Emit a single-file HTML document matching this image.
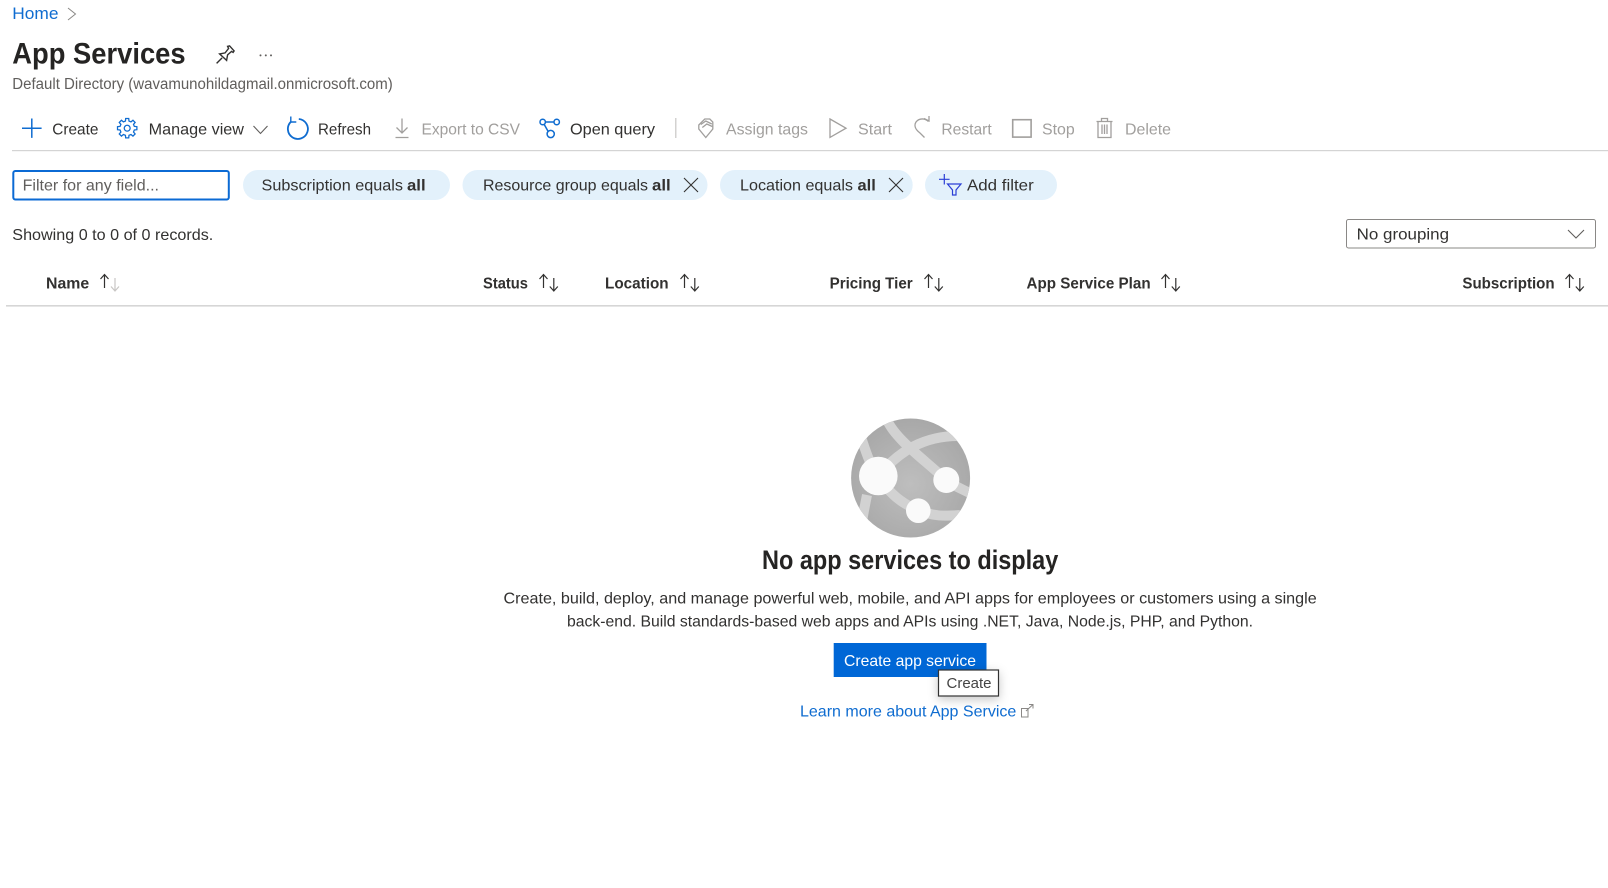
<!DOCTYPE html>
<html lang="en">
<head>
<meta charset="utf-8">
<title>App Services</title>
<style>
html,body{margin:0;padding:0;background:#fff;width:1608px;height:888px;overflow:hidden}
svg{display:block}
text{font-family:"Liberation Sans",Arial,sans-serif;font-size:16px;fill:#323130}
.b{font-weight:700}
.d{fill:#a19f9d}
.l{fill:#0f6cd0}
.h{font-weight:700;fill:#323130}
.ic{fill:none;stroke-width:1.3}
.blue{stroke:#0f6cd0}
.gray{stroke:#a19f9d}
</style>
</head>
<body>
<svg width="1608" height="888" viewBox="0 0 1608 888" xmlns="http://www.w3.org/2000/svg">
<defs>
<clipPath id="g"><circle cx="910.6" cy="478" r="59.5"/></clipPath>
<radialGradient id="gg" cx="50%" cy="55%" r="55%"><stop offset="0" stop-color="#bebebe"/><stop offset="1" stop-color="#a8a8a8"/></radialGradient>
<filter id="sh" x="-30%" y="-50%" width="160%" height="220%"><feDropShadow dx="0" dy="3" stdDeviation="5" flood-color="#000" flood-opacity=".22"/></filter>
</defs>

<!-- breadcrumb -->
<text x="12.3" y="19" class="l" style="font-size:17px" textLength="46.2" lengthAdjust="spacingAndGlyphs">Home</text>
<path d="M68 8l7.5 6-7.5 6" fill="none" stroke="#8a8886" stroke-width="1"/>

<!-- title -->
<text x="12.3" y="63.500" class="b" style="font-size:30px;fill:#252423" textLength="173.3" lengthAdjust="spacingAndGlyphs">App Services</text>
<g transform="translate(225.6 54.4)" fill="none" stroke="#323130" stroke-width="1.4">
<path d="M-9 9l5.5-5.5M-6 -0.5L-0.5 -1.5L3 -6L2 -8L4 -8.5L8.5 -3.5L7.5 -2L6 -3L2 0.5L1 6Z"/>
</g>
<g fill="#605e5c"><circle cx="260.5" cy="55.4" r="1"/><circle cx="265.8" cy="55.4" r="1"/><circle cx="271" cy="55.4" r="1"/></g>
<text x="12.3" y="89" style="font-size:15.5px;fill:#605e5c" textLength="380.5" lengthAdjust="spacingAndGlyphs">Default Directory (wavamunohildagmail.onmicrosoft.com)</text>

<!-- toolbar -->
<path d="M31.8 118.5v19.4M22 128.2h19.6" class="ic blue" style="stroke-width:1.5"/>
<text x="52.3" y="134.3" textLength="46.1" lengthAdjust="spacingAndGlyphs">Create</text>

<g transform="translate(127.2 128.2) scale(.98)" class="ic blue">
<path d="M7.28 -1.81L9.88 -1.56L9.88 1.56L7.28 1.81L6.43 3.86L8.09 5.88L5.88 8.09L3.86 6.43L1.81 7.28L1.56 9.88L-1.56 9.88L-1.81 7.28L-3.86 6.43L-5.88 8.09L-8.09 5.88L-6.43 3.86L-7.28 1.81L-9.88 1.56L-9.88 -1.56L-7.28 -1.81L-6.43 -3.86L-8.09 -5.88L-5.88 -8.09L-3.86 -6.43L-1.81 -7.28L-1.56 -9.88L1.56 -9.88L1.81 -7.28L3.86 -6.43L5.88 -8.09L8.09 -5.88L6.43 -3.86Z"/>
<circle r="3"/>
</g>
<text x="148.7" y="134.3" textLength="95.3" lengthAdjust="spacingAndGlyphs">Manage view</text>
<path d="M253.5 126l7 7.5 7-7.5" fill="none" stroke="#605e5c" stroke-width="1.1"/>

<g transform="translate(297.8 129)" fill="none" stroke="#0f6cd0">
<path d="M1 -10A10 10 0 1 1 -6.8 -7.3" stroke-width="1.8"/>
<path d="M-7 -12.5V-7H-1.500" stroke-width="1.4"/>
</g>
<text x="318" y="134.3" textLength="53" lengthAdjust="spacingAndGlyphs">Refresh</text>

<path d="M402 118.5v14M396.5 127.5l5.5 5.5 5.5-5.5M395.5 137.5h13" class="ic gray"/>
<text x="421.5" y="134.3" class="d" textLength="98.5" lengthAdjust="spacingAndGlyphs">Export to CSV</text>

<g class="ic blue" style="stroke-width:1.5" transform="translate(549.7 128)">
<circle cx="-7" cy="-6" r="2.7"/><circle cx="7" cy="-6" r="2.7"/><circle cx="1" cy="6" r="3.6"/>
<path d="M-4.3 -6H4.3M-5.6 -3.7L-1.5 3.500"/>
</g>
<text x="570" y="134.3" textLength="85" lengthAdjust="spacingAndGlyphs">Open query</text>

<path d="M675.8 118v20" stroke="#c8c6c4" stroke-width="1.2"/>

<g class="ic gray" transform="translate(705.8 128)">
<path d="M-7 -3L-1 -9L4 -9L7 -6L7 1L0 9.500L-7 1Z"/>
<path d="M-5 -3.500L0 -7L6 -4M-3.500 -0.500L1 -4L6.500 -1.500"/>
</g>
<text x="726" y="134.3" class="d" textLength="82" lengthAdjust="spacingAndGlyphs">Assign tags</text>

<path d="M830 119l16 9.2-16 9.2z" class="ic gray"/>
<text x="858" y="134.3" class="d" textLength="34" lengthAdjust="spacingAndGlyphs">Start</text>

<g class="ic gray" transform="translate(922 128)">
<path d="M6.500 -6.500C3 -10 -3 -10 -6 -6C-8.500 -2 -6 2 -2 5L2.500 9.500"/>
<path d="M2 -9.500L7 -7L7 -12"/>
</g>
<text x="941.4" y="134.3" class="d" textLength="50.3" lengthAdjust="spacingAndGlyphs">Restart</text>

<rect x="1012.7" y="119.7" width="18.4" height="17.4" fill="none" stroke="#a19f9d" stroke-width="1.6"/>
<text x="1042" y="134.3" class="d" textLength="32.7" lengthAdjust="spacingAndGlyphs">Stop</text>

<g class="ic gray" transform="translate(1104.5 128)">
<path d="M-8 -6.500H8M-3 -6.500V-9.500H3V-6.500M-6.500 -6.500V9.500H6.500V-6.500M-2.500 -3.500V6M0 -3.500V6M2.500 -3.500V6"/>
</g>
<text x="1125" y="134.3" class="d" textLength="46" lengthAdjust="spacingAndGlyphs">Delete</text>

<rect x="12" y="150" width="1596" height="1.2" fill="#d4d4d4"/>

<!-- filter row -->
<rect x="13.3" y="171" width="215.5" height="28.5" rx="2" fill="#fff" stroke="#0b6ad4" stroke-width="2"/>
<text x="22.6" y="190.3" style="fill:#605e5c" textLength="136.4" lengthAdjust="spacingAndGlyphs">Filter for any field...</text>

<rect x="243" y="170" width="207" height="30" rx="15" fill="#e3f1fb"/>
<text x="261.500" y="190.3" textLength="141.5" lengthAdjust="spacingAndGlyphs">Subscription equals</text>
<text x="407" y="190.3" class="b" textLength="18.6" lengthAdjust="spacingAndGlyphs">all</text>

<rect x="462.5" y="170" width="245" height="30" rx="15" fill="#e3f1fb"/>
<text x="483" y="190.3" textLength="165" lengthAdjust="spacingAndGlyphs">Resource group equals</text>
<text x="652" y="190.3" class="b" textLength="18.7" lengthAdjust="spacingAndGlyphs">all</text>
<path d="M684 178l14 14M698 178l-14 14" stroke="#323130" stroke-width="1.1"/>

<rect x="720" y="170" width="192.7" height="30" rx="15" fill="#e3f1fb"/>
<text x="740" y="190.3" textLength="113" lengthAdjust="spacingAndGlyphs">Location equals</text>
<text x="857.500" y="190.3" class="b" textLength="18.3" lengthAdjust="spacingAndGlyphs">all</text>
<path d="M889 178l14 14M903 178l-14 14" stroke="#323130" stroke-width="1.1"/>

<rect x="925" y="170" width="132" height="30" rx="15" fill="#e3f1fb"/>
<g fill="none" stroke="#2b3fd6" stroke-width="1.2">
<path d="M944.3 174v10.500M939 179.300h10.600"/>
<path d="M947.500 184h13.500l-5 6v5h-3.500v-5z"/>
</g>
<text x="967" y="190.3" textLength="66.7" lengthAdjust="spacingAndGlyphs">Add filter</text>

<!-- records row -->
<text x="12.3" y="240" textLength="201" lengthAdjust="spacingAndGlyphs">Showing 0 to 0 of 0 records.</text>
<rect x="1346.5" y="219.5" width="249" height="28.5" rx="2" fill="#fff" stroke="#8a8886"/>
<text x="1356.7" y="239.3" textLength="92.3" lengthAdjust="spacingAndGlyphs">No grouping</text>
<path d="M1568 230l8 8 8-8" fill="none" stroke="#605e5c" stroke-width="1.1"/>

<!-- table header -->
<text x="46" y="288.5" class="h" textLength="43.2" lengthAdjust="spacingAndGlyphs">Name</text>
<g fill="none" stroke-width="1.2">
<path d="M104.500 288v-13M100.500 279l4-4.500 4 4.500" stroke="#323130"/>
<path d="M115 278v13M111 286.500l4 4.500 4-4.500" stroke="#c8c6c4"/>
</g>
<text x="483" y="288.5" class="h" textLength="45" lengthAdjust="spacingAndGlyphs">Status</text>
<path id="a" d="M543.500 288v-13M539.500 279l4-4.500 4 4.500M553.800 278v13M549.800 286.500l4 4.500 4-4.500" fill="none" stroke="#323130" stroke-width="1.2"/>
<text x="605" y="288.5" class="h" textLength="63.6" lengthAdjust="spacingAndGlyphs">Location</text>
<use href="#a" x="141"/>
<text x="829.6" y="288.5" class="h" textLength="83.1" lengthAdjust="spacingAndGlyphs">Pricing Tier</text>
<use href="#a" x="385"/>
<text x="1026.5" y="288.5" class="h" textLength="124.1" lengthAdjust="spacingAndGlyphs">App Service Plan</text>
<use href="#a" x="622"/>
<text x="1462.4" y="288.5" class="h" textLength="92.2" lengthAdjust="spacingAndGlyphs">Subscription</text>
<use href="#a" x="1026"/>
<rect x="6" y="305" width="1602" height="1.6" fill="#d6d6d6"/>

<!-- globe -->
<circle cx="910.6" cy="478" r="59.5" fill="url(#gg)"/>
<g clip-path="url(#g)" fill="none" stroke="#d2d2d2" stroke-width="10">
<path d="M887 420C896 440 925 460 946 480C955 487 965 490 975 496"/>
<path d="M958 436C925 436 900 450 878 476"/>
<path d="M862 440C866 452 870 465 878 476"/>
<path d="M867 495C865 505 863 515 862 522"/>
<path d="M878 476C890 495 905 505 918 510C935 517 945 516 960 515"/>
</g>
<circle cx="878.3" cy="476" r="19.3" fill="#fafafa"/>
<circle cx="946.3" cy="480" r="13" fill="#fafafa"/>
<circle cx="918.3" cy="510.7" r="12.3" fill="#fafafa"/>

<!-- empty state -->
<text x="762" y="569" class="b" style="font-size:27px;fill:#252423" textLength="296.3" lengthAdjust="spacingAndGlyphs">No app services to display</text>
<text x="503.5" y="603.5" textLength="813.2" lengthAdjust="spacingAndGlyphs">Create, build, deploy, and manage powerful web, mobile, and API apps for employees or customers using a single</text>
<text x="567" y="626.5" textLength="686" lengthAdjust="spacingAndGlyphs">back-end. Build standards-based web apps and APIs using .NET, Java, Node.js, PHP, and Python.</text>

<rect x="833.7" y="643" width="152.8" height="34" fill="#0067d6"/>
<text x="844" y="666" style="fill:#fff" textLength="132" lengthAdjust="spacingAndGlyphs">Create app service</text>

<rect x="938.5" y="670" width="60" height="26" fill="#fff" stroke="#333" stroke-width="1.2" filter="url(#sh)"/>
<text x="946.5" y="688" style="font-size:15px;fill:#444" textLength="45" lengthAdjust="spacingAndGlyphs">Create</text>

<text x="800" y="716.5" class="l" textLength="216.3" lengthAdjust="spacingAndGlyphs">Learn more about App Service</text>
<g fill="none" stroke="#8a8886" stroke-width="1">
<path d="M1028 709.5v7.5h-6.5v-8.5h7"/>
<path d="M1026 711l7-6.5M1029 704.5h4v4"/>
</g>
</svg>
</body>
</html>
